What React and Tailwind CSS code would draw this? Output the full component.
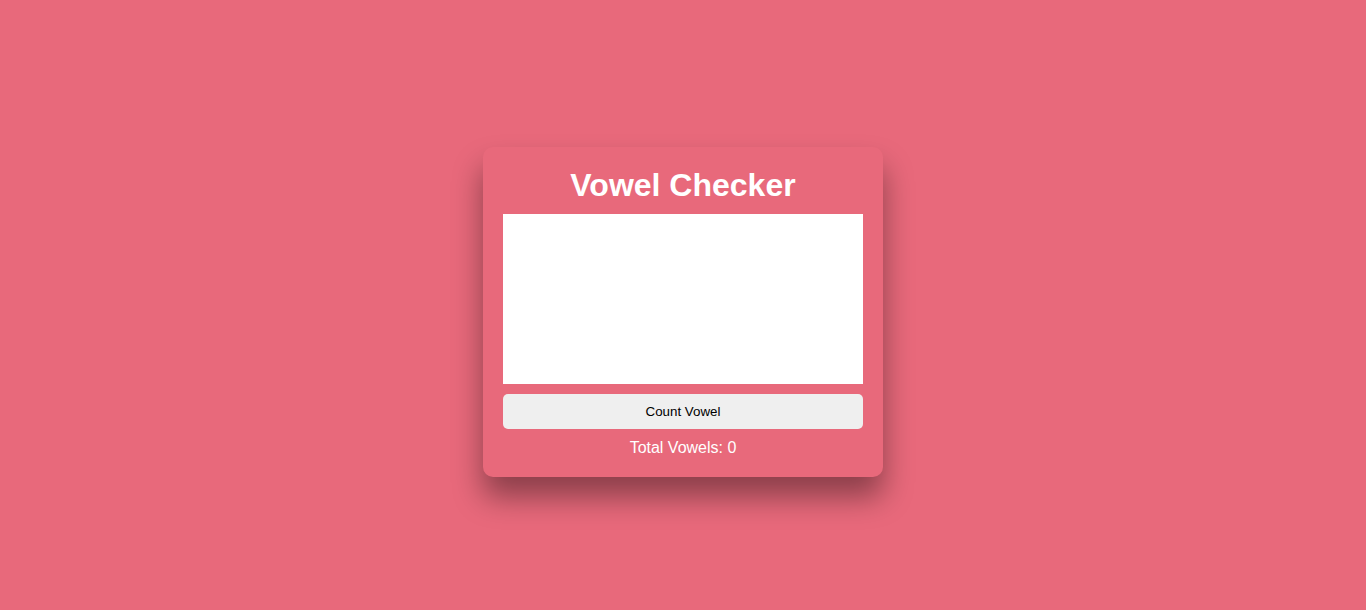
export default function App() {
  return (
    <div className="flex h-[610px] w-full justify-center bg-[#e8697b] pt-[147px] font-['Liberation_Sans',Arial,sans-serif]">
      <div className="flex h-[330px] w-[400px] flex-col rounded-[10px] bg-[#e8697b] p-5 shadow-[0_20px_30px_rgba(0,0,0,0.4)]">
        <h1 className="h-[37px] text-center text-[32px] font-bold leading-[37px] text-white">
          Vowel Checker
        </h1>
        <textarea className="mt-[10px] h-[170px] w-full resize-none border-0 bg-white p-2 text-sm outline-none" />
        <button className="mt-[10px] h-[35px] w-full rounded-[5px] bg-[#efefef] text-[13.33px] text-black">
          Count Vowel
        </button>
        <p className="mt-[10px] text-center text-base leading-[18px] text-white">
          Total Vowels: 0
        </p>
      </div>
    </div>
  );
}
